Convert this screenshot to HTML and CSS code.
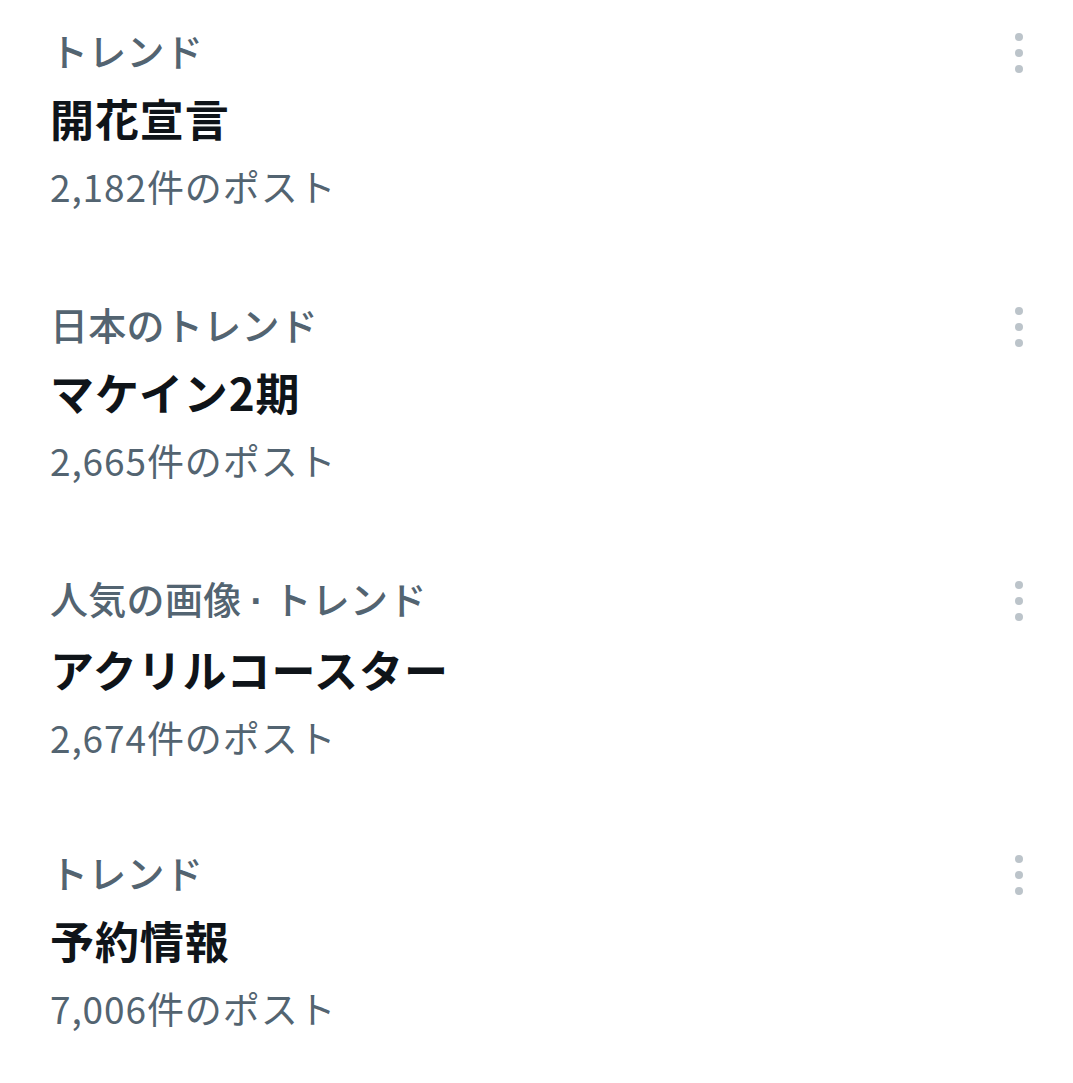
FILE: index.html
```html
<!DOCTYPE html>
<html lang="ja">
<head>
<meta charset="utf-8">
<link rel="stylesheet" href="styles.css">
</head>
<body>
<div class="list">
  <div class="trend">
    <div class="info">
      <div class="cat">トレンド</div>
      <div class="title">開花宣言</div>
      <div class="count">2,182件のポスト</div>
    </div>
    <div class="more"><span></span><span></span><span></span></div>
  </div>
  <div class="trend">
    <div class="info">
      <div class="cat">日本のトレンド</div>
      <div class="title">マケイン2期</div>
      <div class="count">2,665件のポスト</div>
    </div>
    <div class="more"><span></span><span></span><span></span></div>
  </div>
  <div class="trend">
    <div class="info">
      <div class="cat">人気の画像<span class="sep">·</span>トレンド</div>
      <div class="title">アクリルコースター</div>
      <div class="count">2,674件のポスト</div>
    </div>
    <div class="more"><span></span><span></span><span></span></div>
  </div>
  <div class="trend">
    <div class="info">
      <div class="cat">トレンド</div>
      <div class="title">予約情報</div>
      <div class="count">7,006件のポスト</div>
    </div>
    <div class="more"><span></span><span></span><span></span></div>
  </div>
</div>
</body>
</html>
```
FILE: styles.css
```css
html, body {
  margin: 0;
  padding: 0;
  background: #ffffff;
}
body {
  font-family: "Noto Sans CJK JP", "Noto Sans", sans-serif;
}
.list {
  display: flex;
  flex-direction: column;
  padding-top: 26px;
}
.trend {
  display: flex;
  justify-content: space-between;
  align-items: flex-start;
  height: 274px;
  padding: 0 50px 0 50px;
}
.info {
  display: flex;
  flex-direction: column;
}
.cat {
  font-size: 38px;
  line-height: 48px;
  font-weight: 500;
  color: #536471;
  letter-spacing: 0.3px;
}
.sep {
  display: inline-block;
  font-family: "Liberation Sans", sans-serif;
  font-weight: 700;
  margin: 0 10px 0 9px;
}
.title {
  margin-top: 16px;
  font-size: 44px;
  line-height: 56px;
  font-weight: 700;
  color: #0f1419;
  letter-spacing: 0.9px;
}
.count {
  margin-top: 16px;
  font-size: 37px;
  line-height: 48px;
  color: #536471;
  letter-spacing: 0.9px;
}
.more {
  display: flex;
  flex-direction: column;
  gap: 8px;
  margin-top: 7px;
}
.more span {
  width: 8px;
  height: 8px;
  border-radius: 50%;
  background: #bcc4ca;
}
```
